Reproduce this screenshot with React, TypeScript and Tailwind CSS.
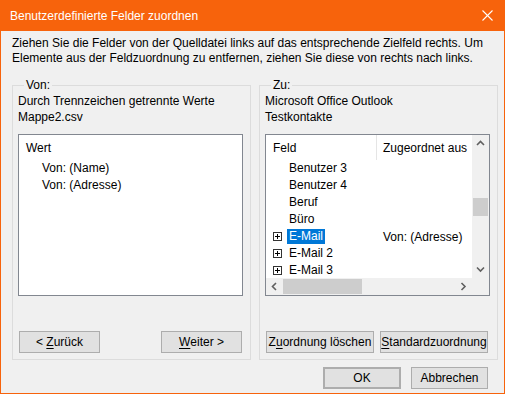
import * as React from "react";

function Chevron({ dir }: { dir: "up" | "down" | "left" | "right" }) {
  const pts: Record<string, string> = {
    up: "1,5 4.5,1.5 8,5",
    down: "1,1.5 4.5,5 8,1.5",
    left: "5,1 1.5,4.5 5,8",
    right: "1.5,1 5,4.5 1.5,8",
  };
  const vertical = dir === "up" || dir === "down";
  return (
    <svg
      width={vertical ? 9 : 7}
      height={vertical ? 7 : 9}
      viewBox={vertical ? "0 0 9 7" : "0 0 7 9"}
    >
      <polyline points={pts[dir]} fill="none" stroke="#606060" strokeWidth="1.6" />
    </svg>
  );
}

function PlusBox() {
  return (
    <svg width="9" height="9" viewBox="0 0 9 9" className="shrink-0">
      <rect x="0.5" y="0.5" width="8" height="8" fill="white" stroke="#333" />
      <line x1="2" y1="4.5" x2="7" y2="4.5" stroke="#000" />
      <line x1="4.5" y1="2" x2="4.5" y2="7" stroke="#000" />
    </svg>
  );
}

function Btn({
  children,
  className = "",
}: {
  children: React.ReactNode;
  className?: string;
}) {
  return (
    <button
      className={
        "h-[22px] bg-[#e1e1e1] border border-[#adadad] flex items-center justify-center leading-none " +
        className
      }
    >
      {children}
    </button>
  );
}

const rows: { name: string; plus?: boolean; selected?: boolean; from?: string }[] = [
  { name: "Benutzer 3" },
  { name: "Benutzer 4" },
  { name: "Beruf" },
  { name: "Büro" },
  { name: "E-Mail", plus: true, selected: true, from: "Von: (Adresse)" },
  { name: "E-Mail 2", plus: true },
  { name: "E-Mail 3", plus: true },
];

export default function App() {
  return (
    <div className="w-[505px] h-[394px] flex flex-col bg-[#f7630c] px-px pb-px font-['Liberation_Sans',sans-serif] text-[12px] text-black">
      {/* title bar */}
      <div className="h-[31px] shrink-0 flex items-center justify-between pl-[9px] pr-[11px] text-white">
        <span>Benutzerdefinierte Felder zuordnen</span>
        <svg width="11" height="11" viewBox="0 0 11 11">
          <line x1="0.5" y1="0.5" x2="10.5" y2="10.5" stroke="white" strokeWidth="1.1" />
          <line x1="10.5" y1="0.5" x2="0.5" y2="10.5" stroke="white" strokeWidth="1.1" />
        </svg>
      </div>

      <div className="flex-1 bg-[#f0f0f0] flex flex-col">
        <p className="pl-[11px] pt-[5px] leading-[15px]">
          Ziehen Sie die Felder von der Quelldatei links auf das entsprechende Zielfeld rechts. Um
          <br />
          Elemente aus der Feldzuordnung zu entfernen, ziehen Sie diese von rechts nach links.
        </p>

        <div className="flex gap-[8px] pl-[11px] mt-[12px]">
          {/* Von */}
          <fieldset className="w-[239px] border border-[#dcdcdc] pl-[5px] pr-[7px] pb-[6px]">
            <legend className="ml-[6px] px-[2px] leading-[15px]">Von:</legend>
            <div className="leading-[16px]">
              <div>Durch Trennzeichen getrennte Werte</div>
              <div>Mappe2.csv</div>
            </div>
            <div className="mt-[9px] w-[225px] h-[162px] bg-white border border-[#828790]">
              <div className="h-[25px] flex items-center pl-[7px]">Wert</div>
              <div className="pl-[23px] leading-[17px]">
                <div>Von: (Name)</div>
                <div>Von: (Adresse)</div>
              </div>
            </div>
            <div className="mt-[35px] w-[225px] flex justify-between px-px">
              <Btn className="w-[81px]">
                &lt;&nbsp;<u className="underline-offset-2">Z</u>urück
              </Btn>
              <Btn className="w-[81px]">
                <u className="underline-offset-2">W</u>eiter &gt;
              </Btn>
            </div>
          </fieldset>

          {/* Zu */}
          <fieldset className="w-[239px] border border-[#dcdcdc] pl-[5px] pr-[7px] pb-[6px]">
            <legend className="ml-[6px] px-[2px] leading-[15px]">Zu:</legend>
            <div className="leading-[16px]">
              <div>Microsoft Office Outlook</div>
              <div>Testkontakte</div>
            </div>
            <div className="mt-[9px] w-[225px] h-[162px] bg-white border border-[#828790] flex flex-col">
              <div className="flex h-[143px]">
                <div className="flex-1 overflow-hidden">
                  <div className="h-[25px] flex">
                    <div className="w-[111px] shrink-0 flex items-center pl-[7px] border-r border-[#e5e5e5]">
                      Feld
                    </div>
                    <div className="flex items-center pl-[6px] whitespace-nowrap">Zugeordnet aus</div>
                  </div>
                  {rows.map((r) => (
                    <div key={r.name} className="h-[17px] flex items-center">
                      <div className="w-[111px] shrink-0 flex items-center pl-[7px]">
                        {r.plus ? <PlusBox /> : <span className="w-[9px] shrink-0" />}
                        <span
                          className={
                            "ml-[5px] px-[2px] leading-[15px] " +
                            (r.selected ? "bg-[#0078d7] text-white" : "")
                          }
                        >
                          {r.name}
                        </span>
                      </div>
                      <div className="pl-[6px] whitespace-nowrap">{r.from}</div>
                    </div>
                  ))}
                </div>
                {/* vertical scrollbar */}
                <div className="w-[17px] bg-[#f0f0f0] flex flex-col">
                  <div className="h-[17px] flex items-center justify-center">
                    <Chevron dir="up" />
                  </div>
                  <div className="flex-1 px-px pt-[46px]">
                    <div className="h-[18px] bg-[#cdcdcd]" />
                  </div>
                  <div className="h-[17px] flex items-center justify-center">
                    <Chevron dir="down" />
                  </div>
                </div>
              </div>
              {/* horizontal scrollbar */}
              <div className="flex h-[17px]">
                <div className="flex-1 bg-[#f0f0f0] flex">
                  <div className="w-[17px] flex items-center justify-center">
                    <Chevron dir="left" />
                  </div>
                  <div className="flex-1 py-px">
                    <div className="w-[79px] h-full bg-[#cdcdcd]" />
                  </div>
                  <div className="w-[17px] flex items-center justify-center">
                    <Chevron dir="right" />
                  </div>
                </div>
                <div className="w-[17px] bg-[#f0f0f0]" />
              </div>
            </div>
            <div className="mt-[35px] flex gap-[6px] pl-px">
              <Btn className="w-[108px]">
                Z<u className="underline-offset-2">u</u>ordnung löschen
              </Btn>
              <Btn className="w-[108px]">
                <u className="underline-offset-2">S</u>tandardzuordnung
              </Btn>
            </div>
          </fieldset>
        </div>

        <div className="flex justify-end gap-[10px] pr-[16px] mt-[7px]">
          <Btn className="w-[78px] border-2 border-[#0078d7]">OK</Btn>
          <Btn className="w-[77px]">Abbrechen</Btn>
        </div>
      </div>
    </div>
  );
}
